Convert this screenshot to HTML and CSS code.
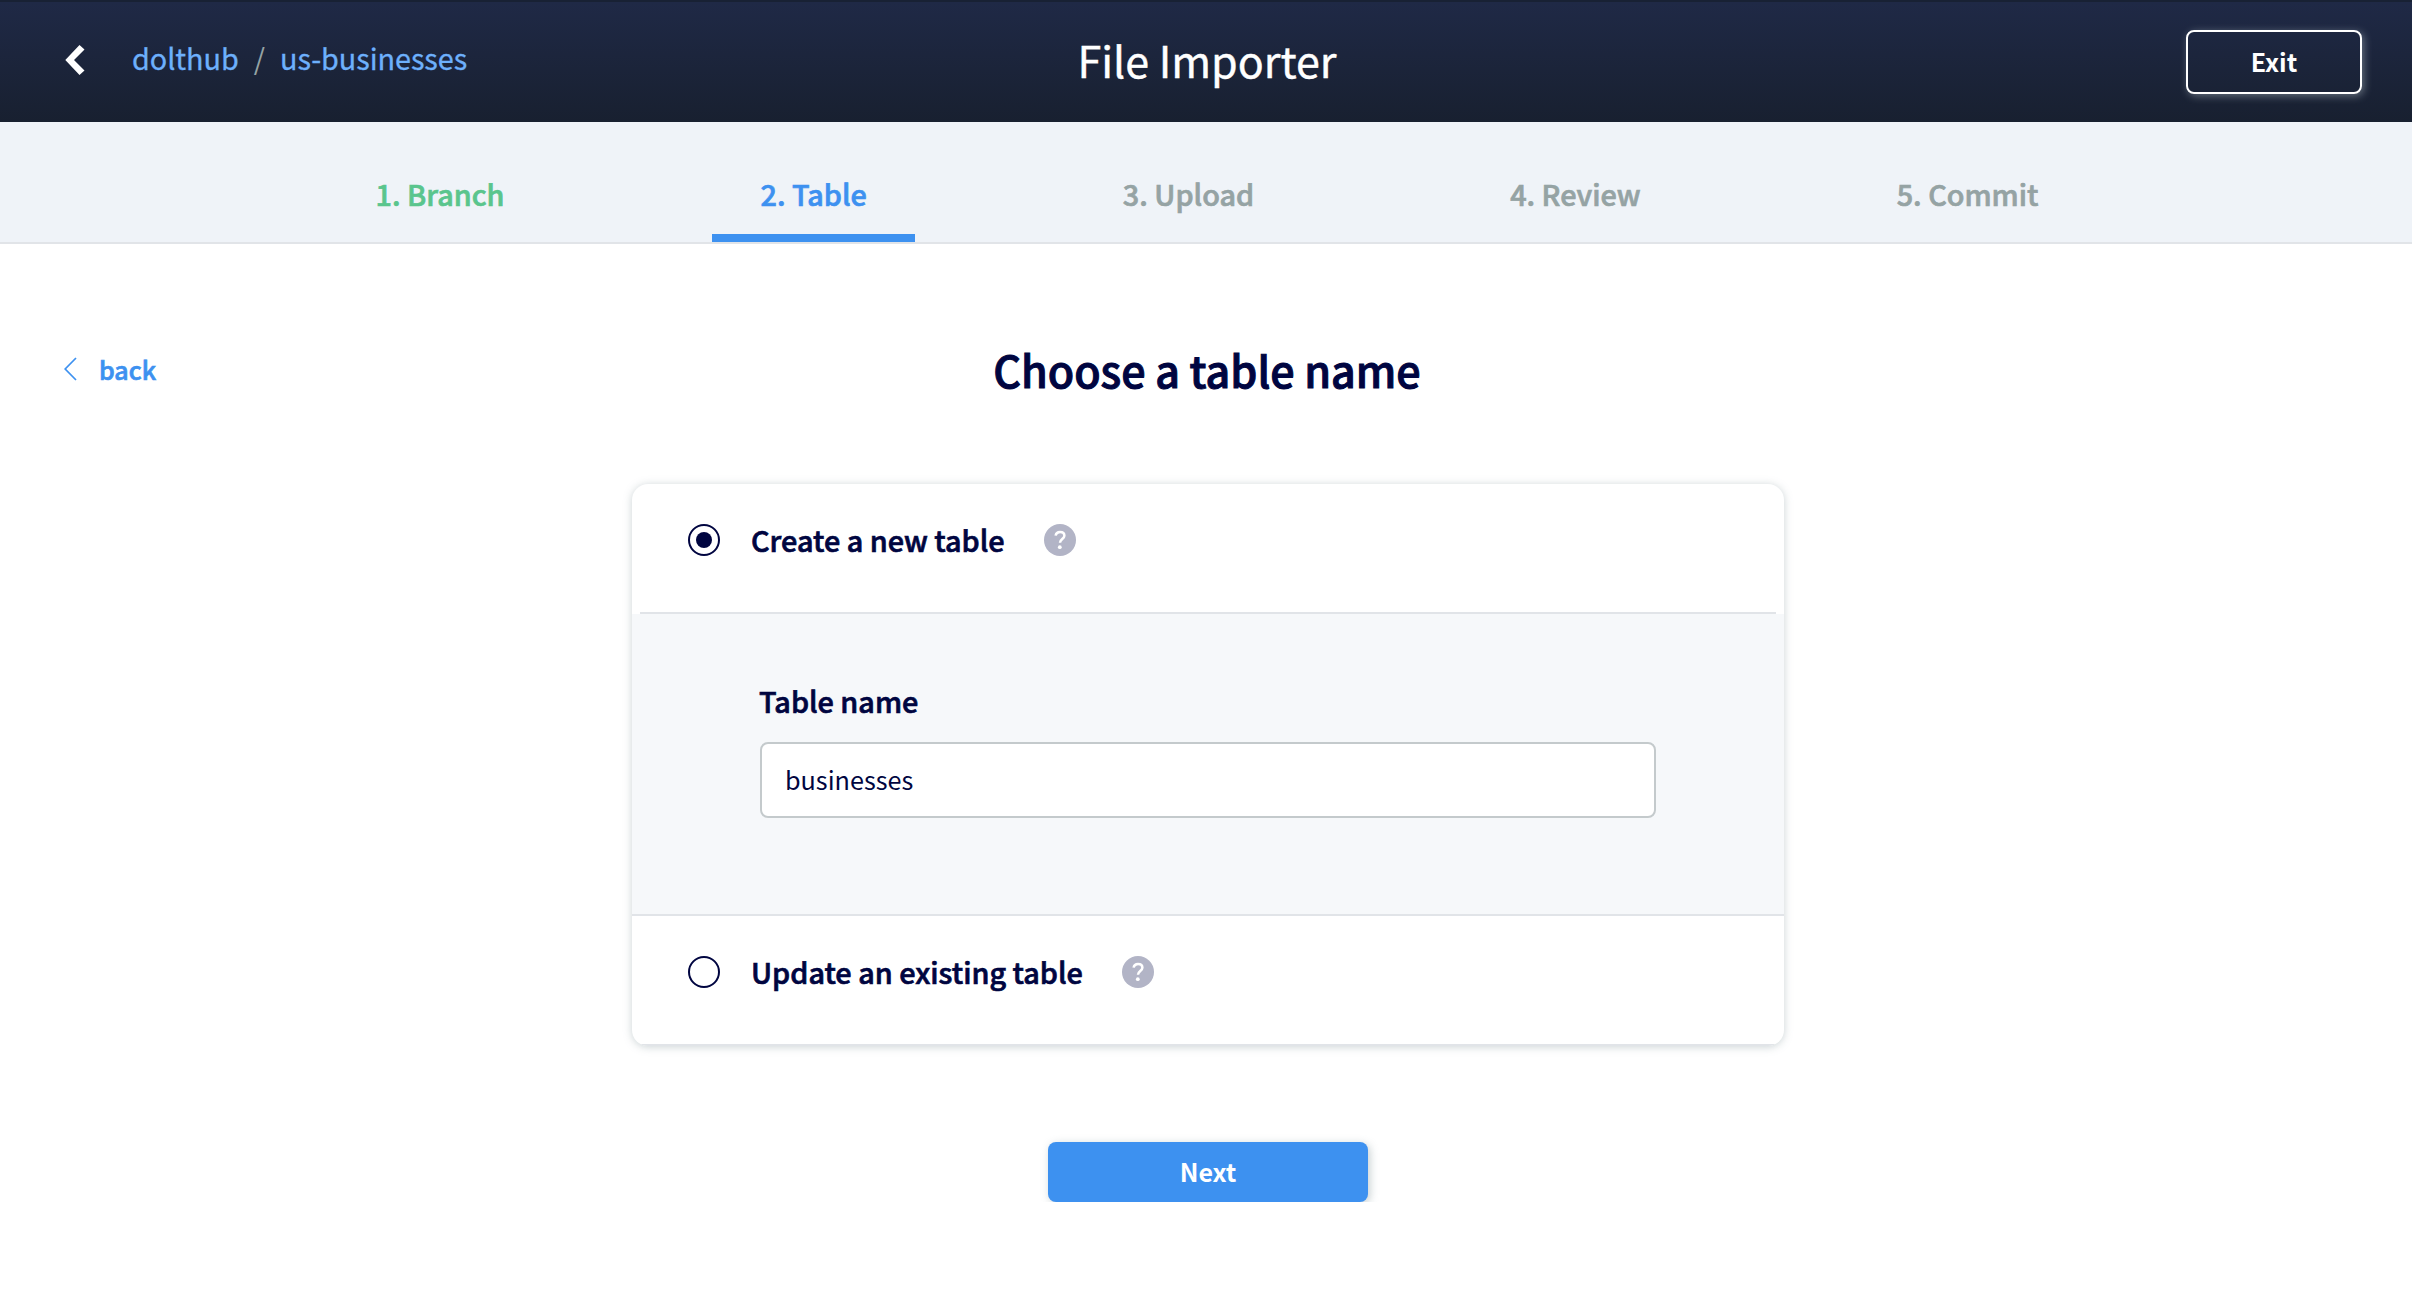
FILE: index.html
```html
<!DOCTYPE html>
<html lang="en">
<head>
<meta charset="utf-8">
<title>File Importer</title>
<link rel="stylesheet" href="styles.css">
</head>
<body>
<header class="header">
  <nav class="crumbs">
    <a class="crumb-back" href="#" aria-label="Back">
      <svg width="20" height="30" viewBox="0 0 20 30"><path d="M14.500 0 19.500 4.500 9 15 19.500 25.500 14.500 30 0.300 15Z" fill="#fff"/></svg>
    </a>
    <a class="crumb owner" href="#">dolthub</a>
    <span class="slash">/</span>
    <a class="crumb repo" href="#">us-businesses</a>
  </nav>
  <div class="title">File Importer</div>
  <div class="header-right"><button class="exit">Exit</button></div>
</header>
<nav class="tabs">
  <div class="tab done">1. Branch</div>
  <div class="tab active">2. Table</div>
  <div class="tab">3. Upload</div>
  <div class="tab">4. Review</div>
  <div class="tab">5. Commit</div>
</nav>
<main class="main">
  <div class="top">
    <a class="back" href="#">
      <svg width="14" height="24" viewBox="0 0 14 24"><path d="M12 1 1.2 12 12 23" fill="none" stroke="#3d91f0" stroke-width="1.7"/></svg>
      <span>back</span>
    </a>
    <h1 class="heading">Choose a table name</h1>
  </div>
  <section class="card">
    <div class="option">
      <span class="radio checked"></span>
      <span class="label">Create a new table</span>
      <svg class="help" width="32" height="32" viewBox="0 0 32 32"><circle cx="16" cy="16" r="16" fill="#b2b4c6"/><path d="M11.6 11.6C12 9.3 13.6 8 16 8c2.600 0 4.400 1.500 4.400 3.700 0 3.300-4.400 3.500-4.400 7" fill="none" stroke="#fff" stroke-width="2.500"/><circle cx="15.800" cy="23.200" r="1.900" fill="#fff"/></svg>
    </div>
    <div class="panel">
      <label class="field-label" for="name">Table name</label>
      <input class="field" id="name" type="text" value="businesses">
    </div>
    <div class="option">
      <span class="radio"></span>
      <span class="label">Update an existing table</span>
      <svg class="help" width="32" height="32" viewBox="0 0 32 32"><circle cx="16" cy="16" r="16" fill="#b2b4c6"/><path d="M11.6 11.6C12 9.3 13.6 8 16 8c2.600 0 4.400 1.500 4.400 3.700 0 3.300-4.400 3.500-4.400 7" fill="none" stroke="#fff" stroke-width="2.500"/><circle cx="15.800" cy="23.200" r="1.900" fill="#fff"/></svg>
    </div>
  </section>
  <button class="next">Next</button>
</main>
</body>
</html>
```

FILE: styles.css
```css
* { box-sizing: border-box; }
body {
  margin: 0;
  background: #fff;
  color: #000540;
  font-family: "Noto Sans CJK JP", "Noto Sans", sans-serif;
  font-size: 28.8px;
}
a { text-decoration: none; }
svg { display: block; flex: none; }
button, input { font-family: inherit; color: inherit; margin: 0; }

/* semibold: medium weight thickened by a hairline stroke */
.tab, .back, .heading, .label, .field-label {
  font-weight: 500;
  -webkit-text-stroke: 0.7px currentColor;
}

.header {
  display: grid;
  grid-template-columns: 1fr auto 1fr;
  height: 122px;
  border-top: 2px solid #182134;
  background: linear-gradient(#1f2946, #182030);
}
.crumbs {
  display: flex;
  align-items: center;
  height: 112px;
  padding-left: 65px;
  line-height: 40px;
}
.crumb-back { margin: 4px 47px 0 0; }
.crumb {
  color: #6db0fc;
  letter-spacing: -0.06px;
  -webkit-text-stroke: 0.3px currentColor;
}
.slash { color: #95a3a4; margin: 0 15px 0 15px; }
.title {
  height: 114px;
  padding-left: 2px;
  line-height: 114px;
  font-size: 43px;
  color: #fff;
  -webkit-text-stroke: 0.4px currentColor;
}
.header-right { display: flex; justify-content: flex-end; padding: 28px 50px 0 0; }
.exit {
  width: 176px;
  height: 64px;
  padding: 0 0 2px;
  border: 2px solid #fff;
  border-radius: 8px;
  background: transparent;
  box-shadow: 2px 2px 8px rgba(190, 205, 210, 0.45);
  color: #fff;
  font-size: 25px;
  font-weight: 700;
  line-height: 58px;
}

.tabs {
  display: flex;
  justify-content: center;
  gap: 160px;
  height: 122px;
  padding-left: 2px;
  border-bottom: 2px solid #e1e4e8;
  background: #eff3f8;
}
.tab {
  padding: 52px 48px 0;
  border-bottom: 8px solid transparent;
  color: #95a3a4;
  line-height: 40px;
}
.tab.done { color: #5ac58d; }
.tab.active { color: #3d91f0; border-color: #3d91f0; }

.main { padding: 95px 0 0; }
.top {
  display: grid;
  grid-template-columns: 1fr auto 1fr;
  height: 145px;
  line-height: 60px;
}
.back {
  display: flex;
  align-items: center;
  gap: 21px;
  height: 60px;
  padding-left: 64px;
  color: #3d91f0;
  font-size: 25px;
}
.heading {
  margin: 0;
  padding-left: 2px;
  font-size: 43px;
  -webkit-text-stroke-width: 1px;
}

.card {
  width: 1152px;
  margin: 0 0 0 632px;
  border-radius: 16px;
  box-shadow: 0 1px 8px rgba(130, 150, 155, 0.42);
  overflow: hidden;
}
.option {
  display: flex;
  align-items: flex-start;
  height: 130px;
  margin: 0 8px;
  padding: 40px 0 0 48px;
  border-bottom: 2px solid #e1e4e8;
}
.radio {
  display: flex;
  align-items: center;
  justify-content: center;
  width: 32px;
  height: 32px;
  margin-right: 31px;
  border: 2px solid #000540;
  border-radius: 50%;
}
.checked::before {
  content: "";
  width: 16px;
  height: 16px;
  border-radius: 50%;
  background: #000540;
}
.label { line-height: 31px; margin-right: 39px; }
.panel {
  height: 302px;
  padding: 67px 128px 0;
  border-bottom: 2px solid #e1e4e8;
  background: #f6f8fa;
}
.field-label {
  display: block;
  height: 61px;
  margin-left: -1px;
  line-height: 40px;
}
.field {
  display: block;
  width: 896px;
  height: 76px;
  padding: 0 23px 2px;
  border: 2px solid #c4cacc;
  border-radius: 8px;
  background: #fff;
  font-size: 25.2px;
}
.next {
  display: block;
  width: 320px;
  height: 60px;
  margin: 96px 0 0 1048px;
  padding: 0 0 2px;
  border: 0;
  border-radius: 8px;
  background: #3d91f0;
  box-shadow: 2px 2px 8px rgba(130, 150, 155, 0.45);
  color: #fff;
  font-size: 25px;
  font-weight: 700;
  line-height: 58px;
}
```
